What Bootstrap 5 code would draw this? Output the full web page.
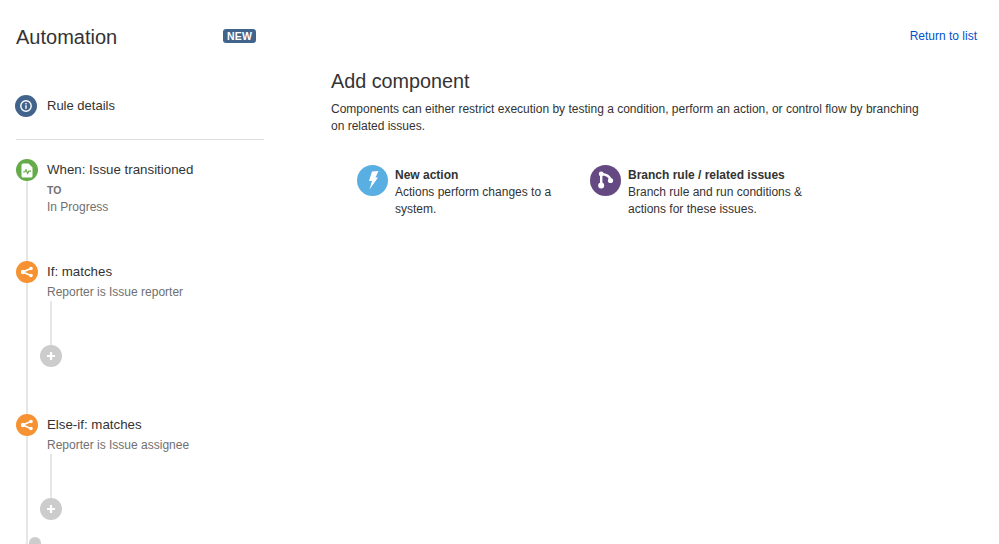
<!DOCTYPE html>
<html lang="en">
<head>
    <meta charset="UTF-8">
    <meta name="viewport" content="width=device-width, initial-scale=1.0">
    <title>Automation</title>
    <link href="https://cdn.jsdelivr.net/npm/bootstrap@5.3.0/dist/css/bootstrap.min.css" rel="stylesheet">
    <style>
        html, body { height: 100%; overflow: hidden; }
        body {
            font-family: "Liberation Sans", Arial, sans-serif;
            font-size: 12px;
            line-height: 17.5px;
            color: #333;
            background: #fff;
        }
        .side-col { width: 265px; margin-left: 16px; flex: none; }
        .main-col { margin-left: 50px; flex: 1; padding-right: 22px; }
        .page-title { font-size: 20px; line-height: 24px; font-weight: 400; color: #333; margin: 25px 0 0; }
        .new-tag { width: 33px; height: 14px; margin-top: 29px; margin-right: 9px; padding: 0; background: #42648c; font-size: 10.5px; line-height: 14px; border-radius: 3px; letter-spacing: .2px; }
        .title-row { width: 249px; }
        .return-link { color: #0052cc; text-decoration: none; margin-top: 28px; white-space: nowrap; }
        .step-dot { width: 22px; height: 22px; border-radius: 50%; flex: none; display: flex; align-items: center; justify-content: center; }
        .dot-info { background: #42648c; margin-left: -1px; }
        .dot-green { background: #65ab4a; margin-left: -12px; }
        .dot-orange { background: #f79232; margin-left: -12px; }
        .step-name { font-size: 13.3px; line-height: 22px; color: #333; }
        .details-row { margin-top: 46px; padding-bottom: 22px; border-bottom: 1px solid #ddd; width: 248px; }
        .details-row .step-name { font-size: 13px; margin-left: 10px; }
        .rail { margin-left: 10px; margin-top: 19px; border-left: 2px solid #e6e6e6; }
        .rail .step-name { margin-left: 9px; }
        .step-when { height: 102px; }
        .step-if { height: 152.5px; }
        .step-body { margin-left: 19px; color: #707070; }
        .to-label { font-size: 10.5px; font-weight: 700; line-height: 14px; margin-top: 2px; }
        .sub-text { line-height: 18px; }
        .when-value { margin-top: 1px; }
        .branch-line { margin-left: 3px; height: 44px; border-left: 2px solid #e6e6e6; }
        .plus-dot { background: #ccc; margin-left: -7px; margin-top: 0; }
        .add-tail { width: 12px; height: 12px; border-radius: 50%; background: #ccc; margin-left: 1px; margin-top: 17px; }
        .main-body { margin-top: 23px; }
        .section-title { font-size: 19.8px; line-height: 24px; font-weight: 400; margin: 0 0 8px; color: #333; }
        .intro-text { width: 590px; margin: 0; color: #333; }
        .option-list { margin-left: 26px; margin-top: 31px; }
        .option-item { width: 233px; }
        .option-text { width: 170px; margin-left: 7px; line-height: 17px; }
        .option-item:last-child .option-text { width: 190px; }
        .option-text b { display: block; color: #333; }
        .option-dot { width: 31px; height: 31px; border-radius: 50%; flex: none; display: flex; align-items: center; justify-content: center; margin-top: -2px; }
        .dot-sky { background: #59afe1; }
        .dot-purple { background: #654982; }
    </style>
</head>
<body>
    <div class="d-flex">
        <div class="side-col">
            <div class="title-row d-flex justify-content-between align-items-start">
                <h1 class="page-title">Automation</h1>
                <span class="badge new-tag">NEW</span>
            </div>

            <div class="details-row d-flex align-items-center">
                <span class="step-dot dot-info">
                    <svg width="14" height="14" viewBox="0 0 14 14" fill="none"><circle cx="7" cy="7" r="5.2" stroke="#fff" stroke-width="1.4"/><rect x="6.3" y="6.2" width="1.4" height="3.6" fill="#fff"/><rect x="6.3" y="4" width="1.4" height="1.4" fill="#fff"/></svg>
                </span>
                <span class="step-name">Rule details</span>
            </div>

            <div class="rail">
                <div class="step-when">
                    <div class="d-flex">
                        <span class="step-dot dot-green">
                            <svg width="12" height="15" viewBox="0 0 12 15"><path d="M2 .5h5.500L11.500 4.500V13a1.500 1.500 0 0 1-1.500 1.500H2A1.500 1.500 0 0 1 .5 13V2A1.500 1.500 0 0 1 2 .5z" fill="#fff"/><path d="M2 9h1.800l1.200-2.200 1.600 3.600 1.200-2.200H10" fill="none" stroke="#65ab4a" stroke-width="1.200"/></svg>
                        </span>
                        <span class="step-name">When: Issue transitioned</span>
                    </div>
                    <div class="step-body">
                        <div class="to-label">TO</div>
                        <div class="sub-text when-value">In Progress</div>
                    </div>
                </div>

                <div class="step-if">
                    <div class="d-flex">
                        <span class="step-dot dot-orange">
                            <svg width="14" height="12" viewBox="0 0 14 12" fill="none"><path d="M3 6l7.500-3.500M3 6l7.500 3.500" stroke="#fff" stroke-width="1.500"/><circle cx="3" cy="6" r="2.200" fill="#fff"/><circle cx="11" cy="2.500" r="1.800" fill="#fff"/><circle cx="11" cy="9.500" r="1.800" fill="#fff"/></svg>
                        </span>
                        <span class="step-name">If: matches</span>
                    </div>
                    <div class="step-body">
                        <div class="sub-text">Reporter is Issue reporter</div>
                        <div class="branch-line"></div>
                        <span class="step-dot plus-dot">
                            <svg width="10" height="10" viewBox="0 0 10 10"><path d="M5 1v8M1 5h8" stroke="#fff" stroke-width="2.200"/></svg>
                        </span>
                    </div>
                </div>

                <div class="step-if">
                    <div class="d-flex">
                        <span class="step-dot dot-orange">
                            <svg width="14" height="12" viewBox="0 0 14 12" fill="none"><path d="M3 6l7.500-3.500M3 6l7.500 3.500" stroke="#fff" stroke-width="1.500"/><circle cx="3" cy="6" r="2.200" fill="#fff"/><circle cx="11" cy="2.500" r="1.800" fill="#fff"/><circle cx="11" cy="9.500" r="1.800" fill="#fff"/></svg>
                        </span>
                        <span class="step-name">Else-if: matches</span>
                    </div>
                    <div class="step-body">
                        <div class="sub-text">Reporter is Issue assignee</div>
                        <div class="branch-line"></div>
                        <span class="step-dot plus-dot">
                            <svg width="10" height="10" viewBox="0 0 10 10"><path d="M5 1v8M1 5h8" stroke="#fff" stroke-width="2.200"/></svg>
                        </span>
                    </div>
                    <div class="add-tail"></div>
                </div>
            </div>
        </div>

        <div class="main-col">
            <div class="d-flex justify-content-end">
                <a href="#" class="return-link">Return to list</a>
            </div>
            <div class="main-body">
                <h2 class="section-title">Add component</h2>
                <p class="intro-text">Components can either restrict execution by testing a condition, perform an action, or control flow by branching on related issues.</p>
                <div class="option-list d-flex">
                    <div class="option-item d-flex">
                        <span class="option-dot dot-sky">
                            <svg width="16" height="20" viewBox="0 0 16 20"><path d="M7 1.500L13.500 1 10.500 7.500H13L4.500 19.500 7 11H4z" fill="#fff"/></svg>
                        </span>
                        <div class="option-text"><b>New action</b>Actions perform changes to a system.</div>
                    </div>
                    <div class="option-item d-flex">
                        <span class="option-dot dot-purple">
                            <svg width="18" height="20" viewBox="0 0 18 20" fill="none"><path d="M4.200 4v11" stroke="#fff" stroke-width="2.400"/><path d="M4.200 4c5 .3 8.500 2.500 9.300 6" stroke="#fff" stroke-width="2.400"/><circle cx="4.200" cy="4" r="2.400" fill="#fff"/><circle cx="4.200" cy="15.500" r="3" fill="#fff"/><circle cx="13.500" cy="10.500" r="2.600" fill="#fff"/></svg>
                        </span>
                        <div class="option-text"><b>Branch rule / related issues</b>Branch rule and run conditions &amp; actions for these issues.</div>
                    </div>
                </div>
            </div>
        </div>
    </div>
    <script src="https://cdn.jsdelivr.net/npm/bootstrap@5.3.0/dist/js/bootstrap.bundle.min.js"></script>
</body>
</html>
